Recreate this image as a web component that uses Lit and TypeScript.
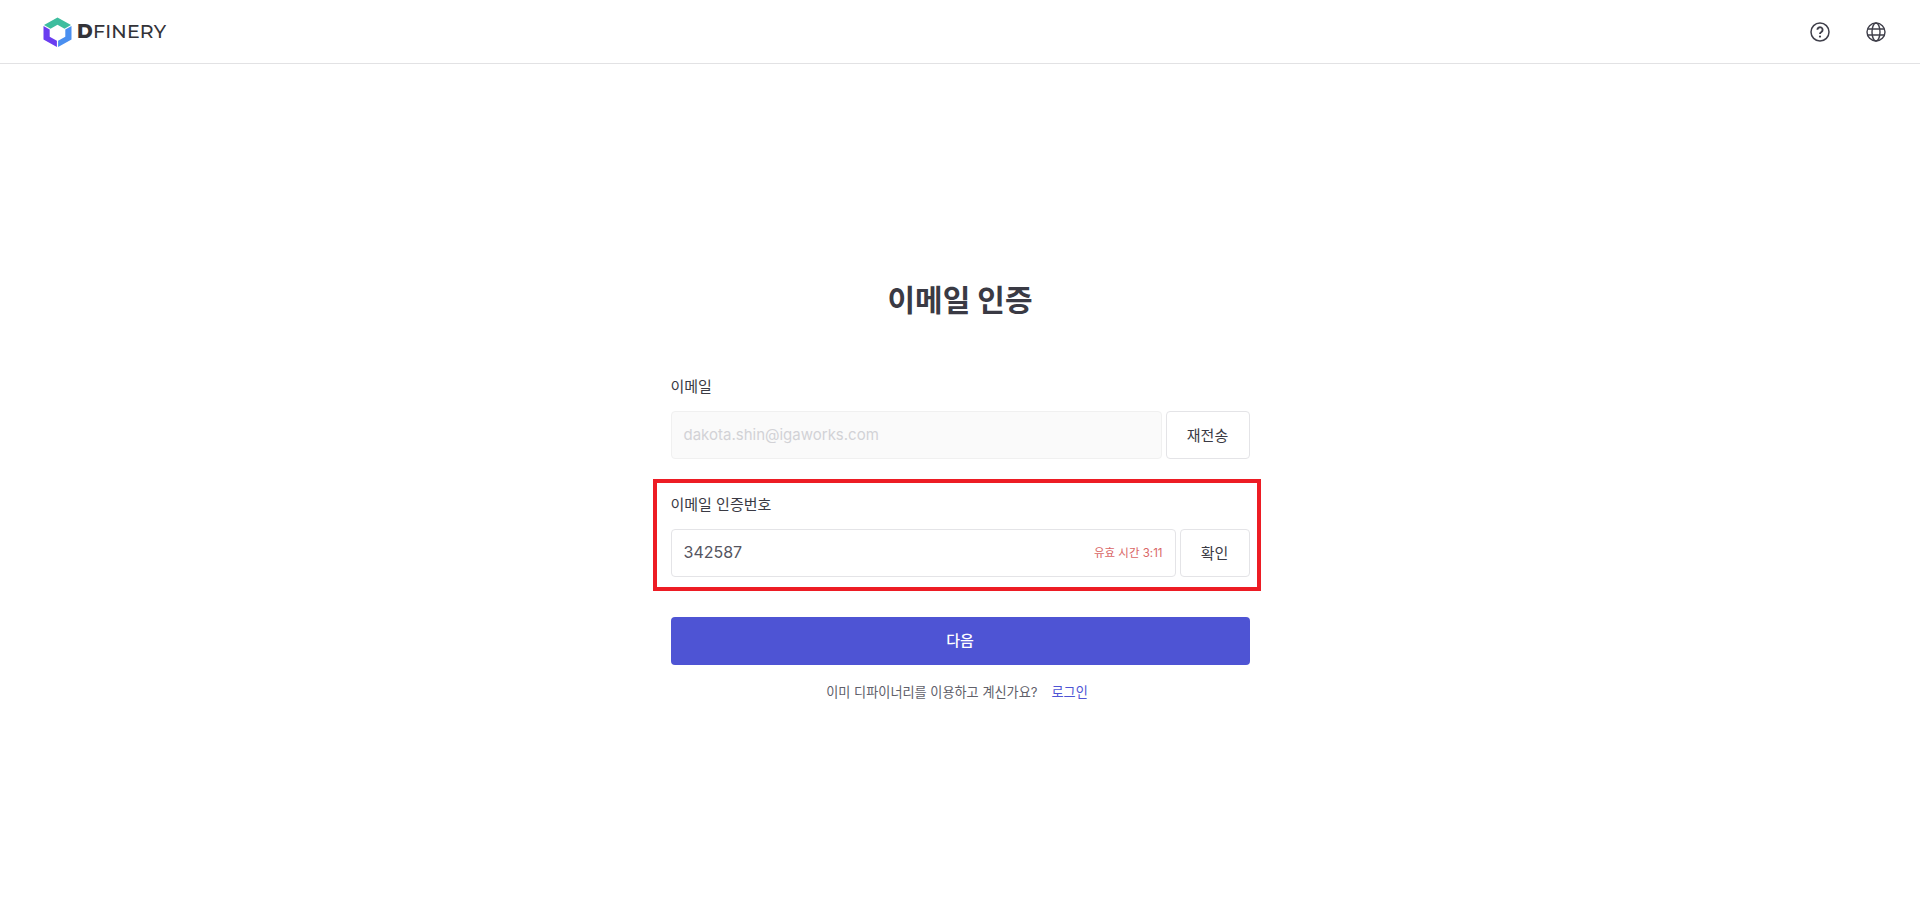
import { LitElement, html, css } from 'lit';
import { customElement } from 'lit/decorators.js';

@customElement('app-root')
export class AppRoot extends LitElement {
  static styles = css`
    :host {
      display: block;
      height: 919px;
      background: #fff;
      color: #3a3a44;
      font-family: Inter, 'Noto Sans CJK KR', sans-serif;
      overflow: hidden;
    }

    .topbar {
      height: 63px;
      border-bottom: 1px solid #e2e2e4;
      display: flex;
      align-items: center;
      justify-content: space-between;
      padding: 0 34px 0 43px;
    }

    .brand {
      display: flex;
      align-items: center;
      gap: 5px;
    }

    .brand svg {
      display: block;
    }

    .wordmark {
      font-family: Montserrat, Lato, Inter, sans-serif;
      font-size: 19px;
      font-weight: 500;
      color: #333338;
      letter-spacing: 0.2px;
    }

    .wordmark b {
      font-weight: 800;
    }

    .top-icons {
      display: flex;
      gap: 36px;
      align-items: center;
    }

    .top-icons svg {
      display: block;
    }

    .page {
      width: 579px;
      margin: 0 auto;
      padding-top: 216px;
    }

    h1 {
      margin: 0;
      font-size: 30px;
      line-height: 40px;
      font-weight: 700;
      text-align: center;
      color: #3a3a44;
    }

    .field {
      margin-top: 56px;
    }

    label {
      display: block;
      font-size: 15px;
      line-height: 22px;
      color: #3a3a44;
      margin-bottom: 13px;
    }

    .row {
      display: flex;
      gap: 4px;
    }

    .input {
      flex: 1;
      height: 48px;
      box-sizing: border-box;
      border: 1px solid #e4e4e7;
      border-radius: 4px;
      display: flex;
      align-items: center;
      justify-content: space-between;
      padding: 0 12px 2px;
      font-size: 15px;
      color: #4a4a54;
      background: #fff;
    }

    .input.disabled {
      background: #fafafa;
      border-color: #f0f0f0;
      color: #d2d2d6;
    }

    .code {
      font-size: 16px;
      color: #55555f;
    }

    .timer {
      font-size: 11.5px;
      color: #d96666;
    }

    button {
      font-family: inherit;
      cursor: pointer;
    }

    .side-btn {
      height: 48px;
      box-sizing: border-box;
      border: 1px solid #e4e4e7;
      border-radius: 4px;
      background: #fff;
      font-size: 15px;
      color: #3a3a44;
      padding: 0 0 2px;
    }

    .resend {
      width: 84px;
    }

    .confirm {
      width: 70px;
    }

    /* red annotation box around the code field */
    .highlight {
      margin: 20px -11px 0 -18px;
      padding: 11px 7px 10px 14px;
      border: 4px solid #ed1c24;
    }

    .next {
      display: block;
      width: 100%;
      height: 48px;
      margin-top: 26px;
      padding: 0 0 3px;
      border: 0;
      border-radius: 4px;
      background: #4e54d4;
      color: #fff;
      font-size: 15px;
      font-weight: 500;
    }

    .hint {
      margin-top: 17px;
      padding-right: 6px;
      display: flex;
      justify-content: center;
      gap: 14px;
      font-size: 13.15px;
      line-height: 20px;
      color: #60606a;
    }

    .hint a {
      color: #4e54d4;
      text-decoration: none;
    }
  `;

  render() {
    return html`
      <header class="topbar">
        <div class="brand">
          <svg width="29" height="30" viewBox="0 0 29 30">
            <path d="M14.5 0.5 L28 8 L21.5 11.8 L14.5 7.8 L7.5 11.8 L1 8 Z" fill="#3dbd9e" />
            <path d="M0.5 9 L6.7 12.6 V19.8 L13.9 23.8 V30 L0.5 22.4 Z" fill="#6a3df0" />
            <path d="M28.5 9 L22.3 12.6 V19.8 L15.1 23.8 V30 L28.5 22.4 Z" fill="#4a8ff0" />
          </svg>
          <span class="wordmark"><b>D</b>FINERY</span>
        </div>
        <div class="top-icons">
          <svg width="20" height="20" viewBox="0 0 20 20" fill="none" stroke="#3f3f4a" stroke-width="1.5">
            <circle cx="10" cy="10" r="9" />
            <path d="M7.4 7.8 a2.6 2.6 0 1 1 4 2.2 c-.9.6-1.4 1-1.4 2" stroke-width="1.9" />
            <circle cx="10" cy="14.6" r="1.1" fill="#3f3f4a" stroke="none" />
          </svg>
          <svg width="20" height="20" viewBox="0 0 20 20" fill="none" stroke="#3f3f4a" stroke-width="1.4">
            <circle cx="10" cy="10" r="9" />
            <ellipse cx="10" cy="10" rx="4" ry="9" />
            <path d="M1.8 7 H18.2 M1.8 13 H18.2" />
          </svg>
        </div>
      </header>
      <main class="page">
        <h1>이메일 인증</h1>
        <div class="field">
          <label>이메일</label>
          <div class="row">
            <div class="input disabled">dakota.shin@igaworks.com</div>
            <button class="side-btn resend">재전송</button>
          </div>
        </div>
        <div class="highlight">
          <label>이메일 인증번호</label>
          <div class="row">
            <div class="input">
              <span class="code">342587</span>
              <span class="timer">유효 시간 3:11</span>
            </div>
            <button class="side-btn confirm">확인</button>
          </div>
        </div>
        <button class="next">다음</button>
        <div class="hint">
          <span>이미 디파이너리를 이용하고 계신가요?</span>
          <a href="#">로그인</a>
        </div>
      </main>
    `;
  }
}
